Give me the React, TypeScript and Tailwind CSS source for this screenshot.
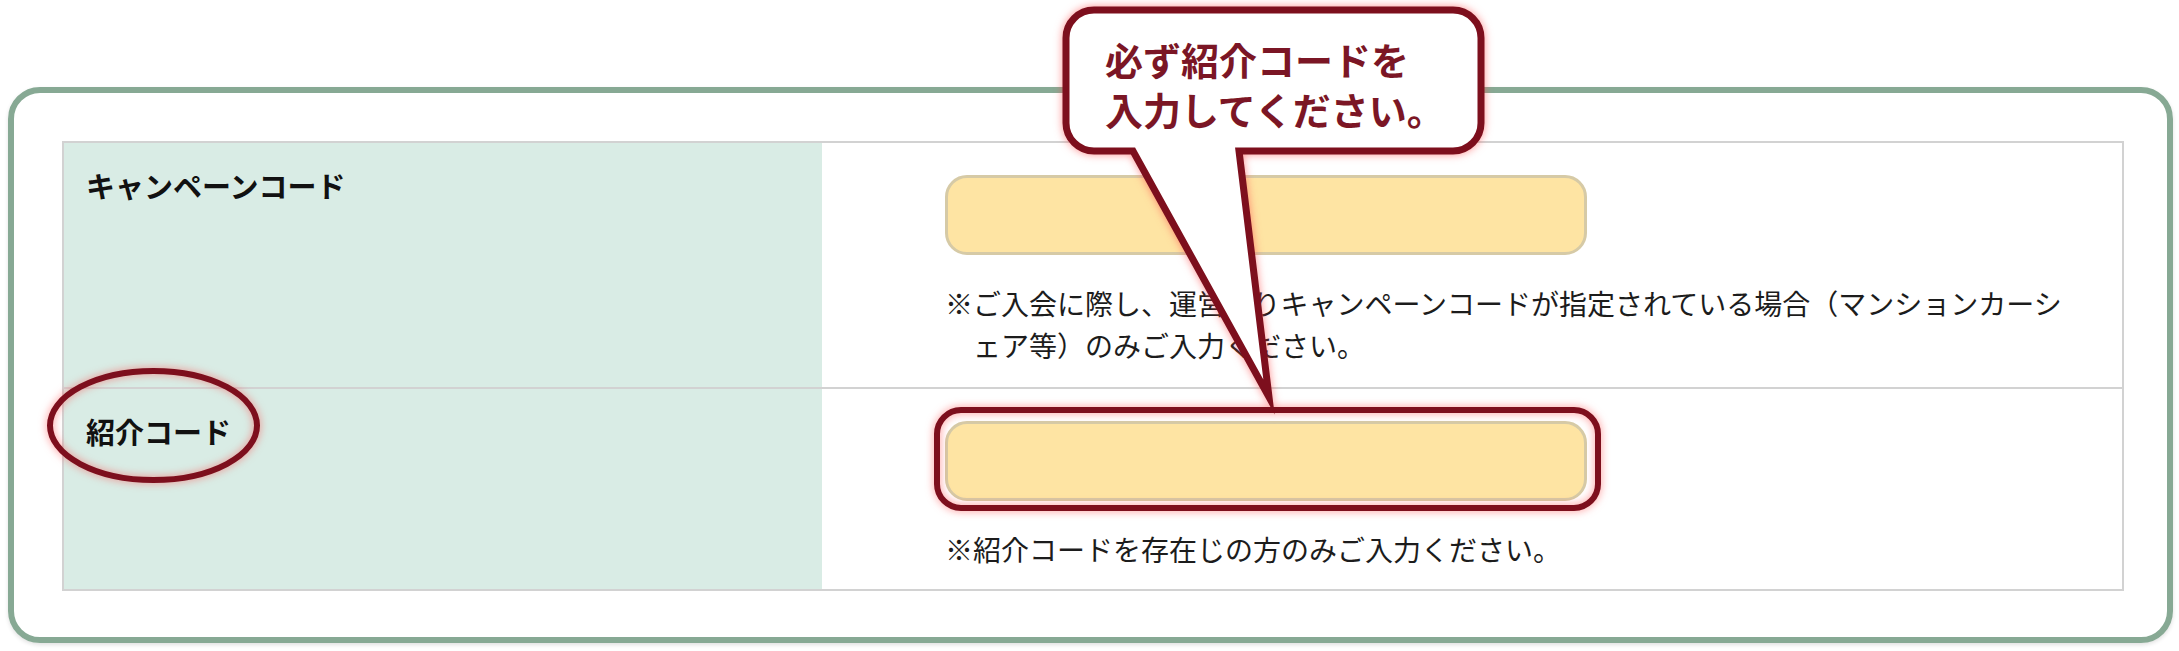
import React from "react";

const jp = "font-['Noto_Sans_CJK_JP','Noto_Sans',sans-serif]";

function Row({
  label,
  note,
  hanging,
  last,
}: {
  label: string;
  note: string;
  hanging?: boolean;
  last?: boolean;
}) {
  return (
    <div className={`grid grid-cols-[758px_1fr] ${last ? "" : "border-b-2 border-[#d2d2d2]"}`}>
      <div className="bg-[#d9ece5] pl-[22px] pt-[21px]">
        <div className="text-[29px] leading-[43px] font-bold text-[#111]">{label}</div>
      </div>
      <div className={`pl-[123px] pr-[43px] pt-[32px] ${last ? "pb-[19px]" : "pb-[21px]"}`}>
        <div className="h-[80px] w-[642px] rounded-[22px] border-[3px] border-[#d6caa6] bg-[#fee4a3]" />
        <p
          className={`mt-[27px] text-[28px] leading-[42px] text-[#1c1c1c] ${
            hanging ? "pl-7 -indent-7" : ""
          }`}
        >
          {note}
        </p>
      </div>
    </div>
  );
}

export default function App() {
  return (
    <div className={`relative h-[651px] w-[2179px] overflow-hidden bg-white pl-[8px] pt-[87px] ${jp}`}>
      <div className="w-[2165px] rounded-[32px] border-[6px] border-[#87a994] pb-[46px] pl-[48px] pr-[43px] pt-[48px] shadow-[0_2px_4px_rgba(0,0,0,0.12)]">
        <div className="border-2 border-[#d2d2d2]">
          <Row
            label="キャンペーンコード"
            note="※ご入会に際し、運営よりキャンペーンコードが指定されている場合（マンションカーシェア等）のみご入力ください。"
            hanging
          />
          <Row label="紹介コード" note="※紹介コードを存在じの方のみご入力ください。" last />
        </div>
      </div>

      {/* annotations drawn over the form */}
      <svg
        className="pointer-events-none absolute left-0 top-0 drop-shadow-[0_0_4px_rgba(255,70,70,0.6)]"
        width="2179"
        height="651"
        viewBox="0 0 2179 651"
      >
        <ellipse cx="153.5" cy="425.5" rx="103.5" ry="54.5" fill="none" stroke="#7d0f1d" strokeWidth="6" />
        <rect x="937" y="410" width="661" height="98" rx="24" fill="none" stroke="#7d0f1d" strokeWidth="6" />
        <path
          d="M 1094 10 H 1453 A 28 28 0 0 1 1481 38 V 123 A 28 28 0 0 1 1453 151 H 1239 L 1269 397 L 1133 151 H 1094 A 28 28 0 0 1 1066 123 V 38 A 28 28 0 0 1 1094 10 Z"
          fill="#ffffff"
          stroke="#7d0f1d"
          strokeWidth="7"
          strokeLinejoin="miter"
          strokeMiterlimit="12"
        />
      </svg>
      <div className="absolute left-[1105px] top-[34px] text-[38px] leading-[50px] font-bold text-[#7b1625]">
        <div>必ず紹介コードを</div>
        <div>入力してください。</div>
      </div>
    </div>
  );
}
